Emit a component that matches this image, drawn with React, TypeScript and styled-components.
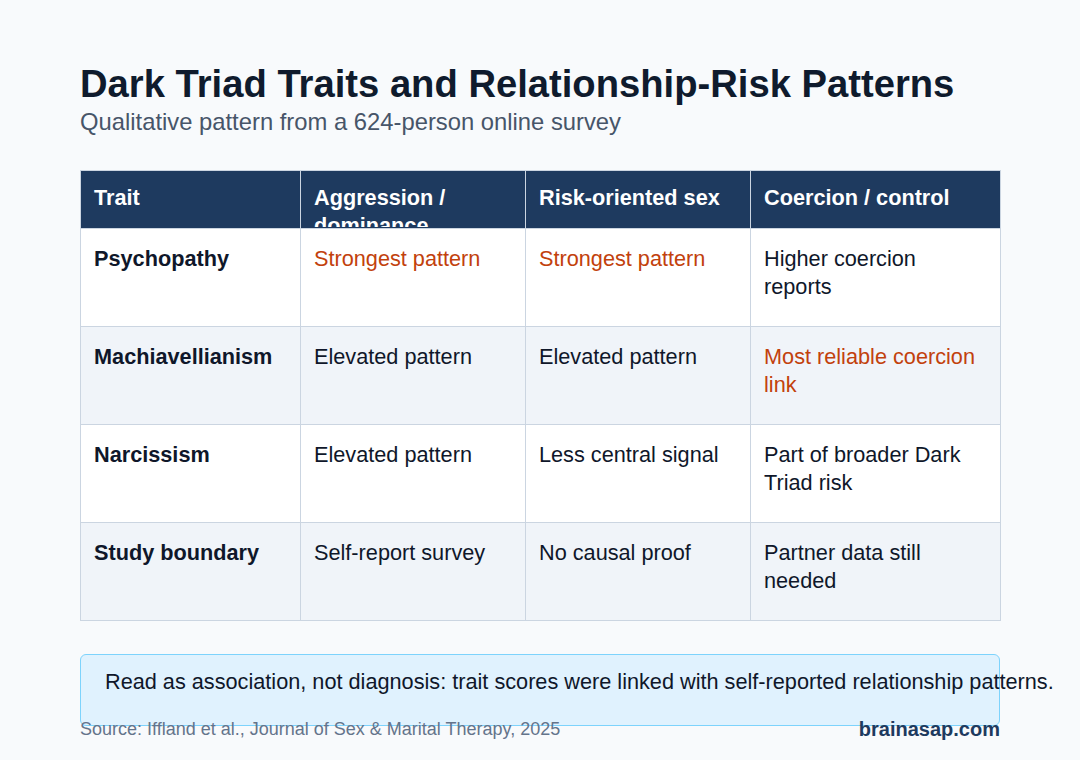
import React from "react";
import styled, { createGlobalStyle } from "styled-components";

const Global = createGlobalStyle`
  html, body { margin: 0; padding: 0; background: #f8fafc; }
  body { font-family: "Liberation Sans", Arial, sans-serif; }
`;

const Page = styled.div`
  width: 1080px;
  height: 760px;
  box-sizing: border-box;
  padding: 61px 80px 0 80px;
  background: #f8fafc;
  display: flex;
  flex-direction: column;
  overflow: hidden;
`;

const Title = styled.h1`
  margin: 0;
  font-size: 38.2px;
  line-height: 46px;
  font-weight: 700;
  color: #0f1b2d;
`;

const Subtitle = styled.p`
  margin: 0;
  font-size: 23.8px;
  line-height: 30px;
  color: #475569;
`;

const Table = styled.table`
  margin-top: 33px;
  width: 920px;
  border-collapse: collapse;
  table-layout: fixed;
  font-size: 21.7px;
  line-height: 28px;
`;

const HeadCell = styled.th`
  height: 58px;
  box-sizing: border-box;
  padding: 0;
  background: #1e3a5f;
  color: #ffffff;
  border: 1px solid #cbd5e1;
  text-align: left;
  vertical-align: top;
  font-weight: 700;
`;

const HeadInner = styled.div`
  height: 56px;
  overflow: hidden;
  padding: 13px 13px 0 13px;
  box-sizing: border-box;
`;

const Row = styled.tr<{ $alt: boolean }>`
  background: ${(p) => (p.$alt ? "#f0f4f9" : "#ffffff")};
`;

const Cell = styled.td<{ $strong?: boolean; $hot?: boolean }>`
  height: 98px;
  box-sizing: border-box;
  padding: 16px 13px;
  border: 1px solid #cbd5e1;
  vertical-align: top;
  font-weight: ${(p) => (p.$strong ? 700 : 400)};
  color: ${(p) => (p.$hot ? "#c2410c" : "#0f172a")};
`;

const Note = styled.div`
  margin-top: 33px;
  height: 72px;
  box-sizing: border-box;
  padding: 13px 24px;
  border: 1px solid #7dd3fc;
  border-radius: 6px;
  background: #e0f2fe;
  color: #0f172a;
  font-size: 21.7px;
  line-height: 28px;
  white-space: nowrap;
`;

const Footer = styled.div`
  margin-top: -8px;
  display: flex;
  justify-content: space-between;
  align-items: center;
  position: relative;
`;

const Source = styled.span`
  font-size: 18px;
  color: #64748b;
`;

const Brand = styled.span`
  font-size: 20px;
  font-weight: 700;
  color: #1e3a5f;
`;

type CellData = { text: string; hot?: boolean };
const rows: { trait: string; cells: CellData[] }[] = [
  {
    trait: "Psychopathy",
    cells: [
      { text: "Strongest pattern", hot: true },
      { text: "Strongest pattern", hot: true },
      { text: "Higher coercion reports" },
    ],
  },
  {
    trait: "Machiavellianism",
    cells: [
      { text: "Elevated pattern" },
      { text: "Elevated pattern" },
      { text: "Most reliable coercion link", hot: true },
    ],
  },
  {
    trait: "Narcissism",
    cells: [
      { text: "Elevated pattern" },
      { text: "Less central signal" },
      { text: "Part of broader Dark Triad risk" },
    ],
  },
  {
    trait: "Study boundary",
    cells: [
      { text: "Self-report survey" },
      { text: "No causal proof" },
      { text: "Partner data still needed" },
    ],
  },
];

const headers = ["Trait", "Aggression / dominance", "Risk-oriented sex", "Coercion / control"];

export default function App() {
  return (
    <>
      <Global />
      <Page>
        <Title>Dark Triad Traits and Relationship-Risk Patterns</Title>
        <Subtitle>Qualitative pattern from a 624-person online survey</Subtitle>
        <Table>
          <colgroup>
            <col style={{ width: 220 }} />
            <col style={{ width: 225 }} />
            <col style={{ width: 225 }} />
            <col style={{ width: 250 }} />
          </colgroup>
          <thead>
            <tr>
              {headers.map((h) => (
                <HeadCell key={h}>
                  <HeadInner>{h}</HeadInner>
                </HeadCell>
              ))}
            </tr>
          </thead>
          <tbody>
            {rows.map((r, i) => (
              <Row key={r.trait} $alt={i % 2 === 1}>
                <Cell $strong>{r.trait}</Cell>
                {r.cells.map((c, j) => (
                  <Cell key={j} $hot={c.hot}>
                    {c.text}
                  </Cell>
                ))}
              </Row>
            ))}
          </tbody>
        </Table>
        <Note>
          Read as association, not diagnosis: trait scores were linked with self-reported relationship patterns.
        </Note>
        <Footer>
          <Source>Source: Iffland et al., Journal of Sex &amp; Marital Therapy, 2025</Source>
          <Brand>brainasap.com</Brand>
        </Footer>
      </Page>
    </>
  );
}
